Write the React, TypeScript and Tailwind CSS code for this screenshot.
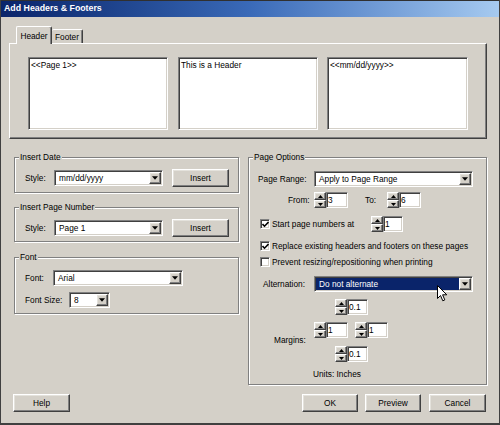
import React from "react";

const sunken =
  "border border-t-[#808080] border-l-[#808080] border-b-white border-r-white shadow-[inset_1px_1px_0_#404040,inset_-1px_-1px_0_#d4d0c8]";
const raised =
  "border border-t-white border-l-white border-b-[#404040] border-r-[#404040] shadow-[inset_-1px_-1px_0_#808080,inset_1px_1px_0_#e4e2dc]";

function Down({ w = 7 }: { w?: number }) {
  return (
    <svg width={w} height={4} viewBox="0 0 7 4">
      <polygon points="0,0 7,0 3.5,4" fill="#000" />
    </svg>
  );
}

function Up() {
  return (
    <svg width={5} height={3} viewBox="0 0 5 3">
      <polygon points="0,3 5,3 2.5,0" fill="#000" />
    </svg>
  );
}

function Select({
  w,
  value,
  selected = false,
  children,
}: {
  w: string;
  value: string;
  selected?: boolean;
  children?: React.ReactNode;
}) {
  return (
    <div className={`relative flex h-[16px] ${w} ${sunken} bg-white p-[1px]`}>
      <div
        className={`flex h-full flex-1 items-center pl-[3px] ${
          selected ? "bg-[#0a246a] text-white" : "bg-white text-black"
        }`}
      >
        {value}
      </div>
      <div className={`flex h-full w-[12px] items-center justify-center bg-[#d4d0c8] ${raised}`}>
        <Down w={6} />
      </div>
      {children}
    </div>
  );
}

function Button({ w, label }: { w: string; label: string }) {
  return (
    <div className={`flex h-[18px] ${w} items-center justify-center bg-[#d4d0c8] ${raised}`}>
      {label}
    </div>
  );
}

function Spin({ value, w }: { value: string; w: string }) {
  return (
    <div className="flex h-[16px]">
      <div className="flex w-[12px] flex-col">
        <div className={`flex h-[8px] items-center justify-center bg-[#d4d0c8] ${raised}`}>
          <Up />
        </div>
        <div className={`flex h-[8px] items-center justify-center bg-[#d4d0c8] ${raised}`}>
          <svg width={5} height={3} viewBox="0 0 5 3">
            <polygon points="0,0 5,0 2.5,3" fill="#000" />
          </svg>
        </div>
      </div>
      <div className={`${w} ${sunken} bg-white pl-[1px] leading-[14px]`}>{value}</div>
    </div>
  );
}

function Check({ checked }: { checked: boolean }) {
  return (
    <div className={`flex h-[10px] w-[10px] shrink-0 items-center justify-center bg-white ${sunken}`}>
      {checked && (
        <svg width={7} height={7} viewBox="0 0 7 7">
          <polyline points="0.5,3 2.5,5.2 6.5,1" fill="none" stroke="#000" strokeWidth={1.6} />
        </svg>
      )}
    </div>
  );
}

function Group({
  title,
  className,
  children,
}: {
  title: string;
  className: string;
  children?: React.ReactNode;
}) {
  return (
    <div
      className={`relative border border-[#808080] shadow-[inset_1px_1px_0_#fff,1px_1px_0_#fff] ${className}`}
    >
      <span className="absolute left-[4px] top-[-6px] bg-[#d4d0c8] px-[1px] leading-[10px]">
        {title}
      </span>
      {children}
    </div>
  );
}

function TextBox({ w, text }: { w: string; text: string }) {
  return (
    <div className={`h-[73px] ${w} bg-white ${sunken} pl-[2px] pt-[2px] leading-[11px]`}>{text}</div>
  );
}

export default function App() {
  return (
    <div
      className="flex h-[425px] w-[500px] flex-col overflow-hidden border-x border-b-2 border-[#404040] bg-[#d4d0c8] text-[8.3px] text-black"
      style={{ fontFamily: '"Liberation Sans", Arial, sans-serif' }}
    >
      {/* Title bar */}
      <div className="flex h-[17px] shrink-0 items-center border-t border-[#303030] bg-gradient-to-r from-[#0a246a] via-[#3a6ab8] to-[#a6caf0] pl-[3px] text-[8.8px] font-bold text-white">
        {"Add Headers & Footers"}
      </div>

      <div className="flex flex-1 flex-col pl-[8px] pr-[12px]">
        {/* Tabs */}
        <div className="mt-[9px] flex h-[17px] items-end pl-[7px]">
          <div className="relative z-10 -mb-[1px] flex h-[18px] w-[36px] items-start justify-center rounded-t-[2px] border-l border-t border-r border-l-white border-t-white border-r-[#404040] bg-[#d4d0c8] pt-[3px] shadow-[inset_-1px_0_0_#808080]">
            Header
          </div>
          <div className="flex h-[14px] w-[31px] items-start justify-center rounded-t-[2px] border-t border-r border-t-white border-r-[#404040] bg-[#d4d0c8] pt-[1px] shadow-[inset_-1px_0_0_#808080]">
            Footer
          </div>
        </div>

        {/* Tab panel */}
        <div className="flex h-[96px] w-[478px] border border-b-[#404040] border-l-white border-r-[#404040] border-t-white pl-[18px] pt-[13px] shadow-[inset_-1px_-1px_0_#808080]">
          <TextBox w="w-[140px]" text="<<Page 1>>" />
          <div className="ml-[10px]">
            <TextBox w="w-[140px]" text="This is a Header" />
          </div>
          <div className="ml-[9px]">
            <TextBox w="w-[141px]" text="<<mm/dd/yyyy>>" />
          </div>
        </div>

        {/* Columns */}
        <div className="mt-[18px] flex pl-[5px]">
          <div className="flex w-[225px] flex-col">
            <Group title="Insert Date" className="h-[36px] pl-[10px] pt-[11px]">
              <div className="flex h-[18px] items-center">
                <span className="w-[29px]">Style:</span>
                <Select w="w-[109px]" value="mm/dd/yyyy" />
                <div className="ml-[9px]">
                  <Button w="w-[57px]" label="Insert" />
                </div>
              </div>
            </Group>
            <Group title="Insert Page Number" className="mt-[14px] h-[35px] pl-[10px] pt-[11px]">
              <div className="flex h-[18px] items-center">
                <span className="w-[29px]">Style:</span>
                <Select w="w-[109px]" value="Page 1" />
                <div className="ml-[9px]">
                  <Button w="w-[57px]" label="Insert" />
                </div>
              </div>
            </Group>
            <Group title="Font" className="mt-[15px] h-[57px] pl-[10px] pt-[12px]">
              <div className="flex h-[16px] items-center">
                <span className="w-[28px]">Font:</span>
                <Select w="w-[130px]" value="Arial" />
              </div>
              <div className="mt-[6px] flex h-[16px] items-center">
                <span className="w-[44px]">Font Size:</span>
                <Select w="w-[41px]" value="8" />
              </div>
            </Group>
          </div>

          <Group title="Page Options" className="ml-[9px] flex h-[228px] w-[239px] flex-col">
            <div className="mt-[13px] flex h-[16px] items-center pl-[9px]">
              <span className="w-[56px]">Page Range:</span>
              <Select w="w-[159px]" value="Apply to Page Range" />
            </div>
            <div className="mt-[5px] flex h-[16px] items-center pl-[39px]">
              <span className="w-[26px]">From:</span>
              <Spin value="3" w="w-[22px]" />
              <span className="ml-[17px] w-[22px]">To:</span>
              <Spin value="6" w="w-[22px]" />
            </div>
            <div className="mt-[8px] flex h-[16px] items-center pl-[11px]">
              <Check checked />
              <span className="ml-[2px] w-[99px]">Start page numbers at</span>
              <Spin value="1" w="w-[20px]" />
            </div>
            <div className="mt-[8px] flex h-[12px] items-center pl-[11px]">
              <Check checked />
              <span className="ml-[2px]">Replace existing headers and footers on these pages</span>
            </div>
            <div className="mt-[4px] flex h-[12px] items-center pl-[11px]">
              <Check checked={false} />
              <span className="ml-[2px]">Prevent resizing/repositioning when printing</span>
            </div>
            <div className="mt-[8px] flex h-[16px] items-center pl-[14px]">
              <span className="w-[51px]">Alternation:</span>
              <Select w="w-[159px]" value="Do not alternate" selected>
                <svg
                  className="absolute left-[122px] top-[8px]"
                  width={11}
                  height={17}
                  viewBox="0 0 11 17"
                >
                  <path
                    d="M0.5 0.5 L0.5 13.5 L3.5 10.5 L5.8 15.8 L7.8 14.9 L5.6 9.8 L9.8 9.8 Z"
                    fill="#fff"
                    stroke="#000"
                    strokeWidth={1}
                    strokeLinejoin="miter"
                  />
                </svg>
              </Select>
            </div>
            <div className="mt-[7px] flex h-[63px]">
              <div className="w-[65px] pl-[25px] pt-[35px] leading-[12px]">Margins:</div>
              <div className="flex flex-col">
                <div className="ml-[21px]">
                  <Spin value="0.1" w="w-[21px]" />
                </div>
                <div className="mt-[7px] flex">
                  <Spin value="1" w="w-[22px]" />
                  <div className="ml-[7px]">
                    <Spin value="1" w="w-[21px]" />
                  </div>
                </div>
                <div className="ml-[21px] mt-[8px]">
                  <Spin value="0.1" w="w-[21px]" />
                </div>
              </div>
            </div>
            <div className="mt-[6px] h-[12px] pl-[64px] leading-[12px]">Units: Inches</div>
          </Group>
        </div>

        {/* Bottom buttons */}
        <div className="mt-[9px] flex h-[18px] items-center pl-[4px] pr-[1px]">
          <Button w="w-[57px]" label="Help" />
          <div className="flex-1" />
          <Button w="w-[56px]" label="OK" />
          <div className="ml-[7px]">
            <Button w="w-[56px]" label="Preview" />
          </div>
          <div className="ml-[8px]">
            <Button w="w-[57px]" label="Cancel" />
          </div>
        </div>
      </div>
    </div>
  );
}
